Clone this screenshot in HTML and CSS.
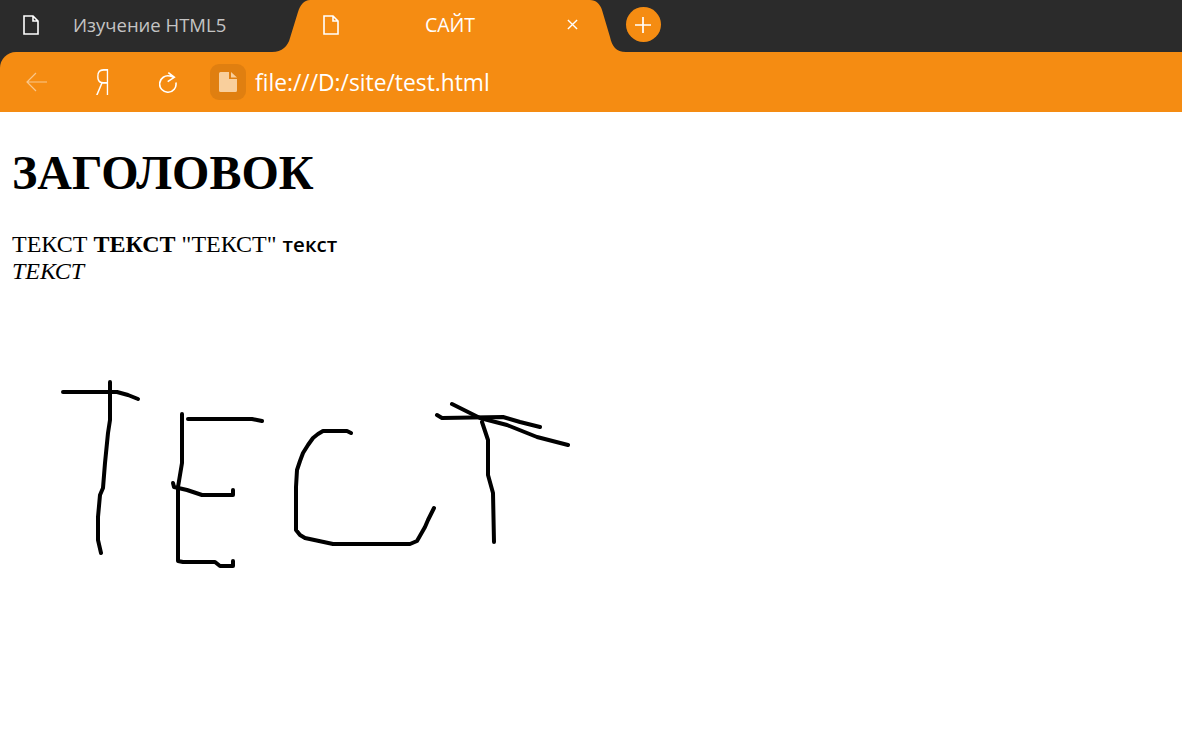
FILE: index.html
```html
<!DOCTYPE html>
<html lang="ru">
<head>
<meta charset="utf-8">
<title>САЙТ</title>
<link rel="stylesheet" href="styles.css">
</head>
<body>
<div class="chrome">
  <div class="tabbar">
    <div class="tab">
      <svg class="doc" viewBox="0 0 16 20"><path d="M1 1H10L15 6V19H1Z M10 1V6H15"/></svg>
      <span class="tab-title">Изучение HTML5</span>
    </div>
    <div class="tab tab-active">
      <svg class="tab-shape" viewBox="0 0 354 52"><path d="M0 52C10 52 16 46 18 38L26 12C28 5 32 0 38 0H318C324 0 328 4 330 10L338 37C340 46 344 52 354 52Z"/></svg>
      <svg class="doc" viewBox="0 0 16 20"><path d="M1 1H10L15 6V19H1Z M10 1V6H15"/></svg>
      <span class="tab-title tab-title-center">САЙТ</span>
      <svg class="close" viewBox="0 0 12 12"><path d="M1 1L11 11M11 1L1 11"/></svg>
    </div>
    <div class="new-tab">
      <svg viewBox="0 0 18 18"><path d="M9 1V17M1 9H17"/></svg>
    </div>
  </div>
  <div class="toolbar">
    <svg class="back" viewBox="0 0 22 20"><path d="M21 10H1M10 1L1 10L10 19"/></svg>
    <span class="ya">Я</span>
    <svg class="reload" viewBox="0 0 18 21"><path d="M15 5.300L11 4.100A8.200 8.200 0 1 0 16.900 10.500M9.300 .7L15.300 5.300L8.700 9.700"/></svg>
    <div class="site-icon">
      <svg viewBox="0 0 18 20"><path d="M1.5 0H10V7H18V18.5A1.5 1.5 0 0 1 16.500 20H1.500A1.500 1.500 0 0 1 0 18.500V1.500A1.500 1.500 0 0 1 1.500 0Z M12 0L18 5.500H12Z"/></svg>
    </div>
    <span class="address">file:///D:/site/test.html</span>
  </div>
</div>
<main class="page">
  <h1 class="heading">ЗАГОЛОВОК</h1>
  <p class="copy">ТЕКСТ <b>ТЕКСТ</b> "ТЕКСТ" <span class="small">текст</span><br><i>ТЕКСТ</i></p>
  <svg class="drawing" viewBox="12 370 600 220">
    <polyline points="63,392 105,392 117,392 128,395 138,399"/>
    <polyline points="110,382 110,420 108,433 105,463 103,488 100,495 98,517 98,540 101,553"/>
    <polyline points="188,419 252,419 262,421"/>
    <polyline points="182,414 182,463 178,487 178,561 183,562 215,562 220,566 233,566 233,561"/>
    <polyline points="173,483 174,487 187,490 202,495 233,495 233,490"/>
    <polyline points="351,433 347,431 323,431 318,434 313,438 308,445 303,453 300,461 297,470 296,487 296,530 300,535 305,538 333,544 410,544 417,541 425,527 428,520 434,508"/>
    <polyline points="437,415 442,418 503,417 520,422 540,427"/>
    <polyline points="452,404 470,413 480,418 507,425 537,437 568,445"/>
    <polyline points="482,422 488,440 488,475 493,493 494,542"/>
  </svg>
</main>
</body>
</html>
```
FILE: styles.css
```css
* { box-sizing: border-box; }
html, body { margin: 0; height: 100%; overflow: hidden; background: #fff; }
body { font-family: "Liberation Serif", serif; color: #000; }

.chrome { background: #2b2b2b; font-family: "Open Sans", sans-serif; }
.tabbar { display: flex; height: 52px; }
.tab { display: flex; align-items: center; width: 272px; padding: 0 0 3px 23px; gap: 34px; }
.doc { width: 16px; height: 20px; flex: none; fill: none; stroke: #fff; stroke-width: 1.6; position: relative; }
.tab-title { font-size: 18.5px; color: #c4c4c4; }
.tab-active { position: relative; width: 354px; padding: 0 48px 3px 51px; gap: 0; }
.tab-shape { position: absolute; left: 0; top: 0; width: 354px; height: 52px; fill: #f58c12; }
.tab-title-center { position: relative; flex: 1; font-size: 19.500px; color: #fff; text-align: center; padding-right: 6px; }
.close { position: relative; width: 11px; height: 11px; fill: none; stroke: #fff; stroke-width: 1.5; }
.new-tab { width: 35px; height: 35px; margin-top: 7px; border-radius: 50%; background: #f58c12; display: flex; align-items: center; justify-content: center; }
.new-tab svg { width: 18px; height: 18px; margin-right: 1px; fill: none; stroke: #fff; stroke-width: 1.7; }

.toolbar { display: flex; align-items: center; height: 60px; background: #f58c12; border-radius: 16px 0 0 0; padding-left: 26px; }
.back { width: 22px; height: 20px; flex: none; fill: none; stroke: #f9c78c; stroke-width: 1.2; }
.ya { width: 24px; margin-left: 43px; font-size: 36px; line-height: 40px; font-weight: 300; color: #fff; text-align: center; transform: scaleX(.7); }
.reload { width: 18px; height: 21px; margin-left: 44px; flex: none; fill: none; stroke: #fff; stroke-width: 1.6; }
.site-icon { width: 36px; height: 36px; margin-left: 33px; border-radius: 9px; background: #e07f10; display: flex; align-items: center; justify-content: center; }
.site-icon svg { width: 18px; height: 20px; fill: #f9cf9c; }
.address { margin-left: 9px; font-size: 22.800px; color: #fff; }

.page { padding: 0 12px; }
.heading { margin: 33px 0 31px; font-size: 48px; line-height: 55px; font-weight: bold; }
.copy { margin: 0; font-size: 24px; line-height: 27px; }
.small { font-family: "Open Sans", sans-serif; font-size: 20.500px; line-height: 20px; font-weight: 600; }
.drawing { display: block; width: 600px; height: 220px; margin-top: 85px; fill: none; stroke: #000; stroke-width: 4; stroke-linejoin: round; stroke-linecap: round; filter: blur(.35px); }
```
